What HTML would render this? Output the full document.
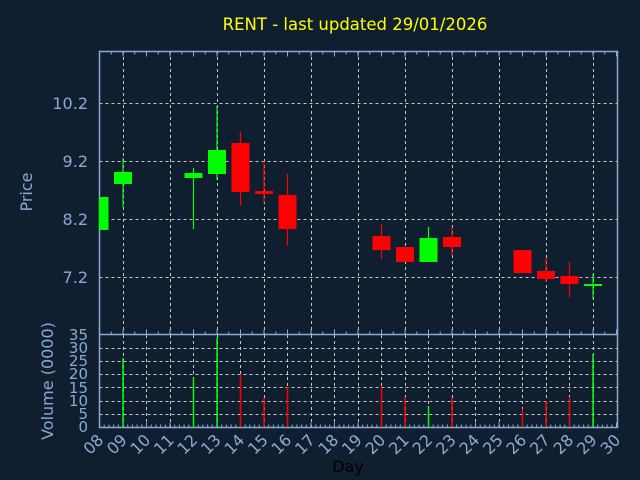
<!DOCTYPE html>
<html><head><meta charset="utf-8"><style>
html,body{margin:0;padding:0;background:#101f30;}
svg{display:block}
text{font-family:"DejaVu Sans","Liberation Sans",sans-serif;}
</style></head><body>
<svg width="640" height="480" viewBox="0 0 640 480" xmlns="http://www.w3.org/2000/svg">
<rect width="640" height="480" fill="#101f30"/>
<text x="355" y="30" fill="#ffff00" font-size="16.5" text-anchor="middle">RENT - last updated 29/01/2026</text>
<g id="grid" stroke="#c8c8c8" stroke-width="1" stroke-dasharray="3,3" fill="none">
<path d="M99.5 103.5H617M99.5 161.5H617M99.5 219.5H617M99.5 277.5H617"/>
<path d="M123.5 51V334M170.5 51V334M217.5 51V334M264.5 51V334M311.5 51V334M358.5 51V334M405.5 51V334M452.5 51V334M499.5 51V334M546.5 51V334M593.5 51V334"/>
<path d="M99.5 414.5H617M99.5 401.5H617M99.5 387.5H617M99.5 374.5H617M99.5 361.5H617M99.5 348.5H617"/>
<path d="M123.5 335V427M146.5 335V427M170.5 335V427M193.5 335V427M217.5 335V427M240.5 335V427M264.5 335V427M287.5 335V427M311.5 335V427M334.5 335V427M358.5 335V427M381.5 335V427M405.5 335V427M428.5 335V427M452.5 335V427M475.5 335V427M499.5 335V427M522.5 335V427M546.5 335V427M569.5 335V427M593.5 335V427"/>
</g>
<g stroke="#8aaad6" stroke-width="1.5" fill="none">
<path d="M99.5 51.5H617.5V427.5H99.5Z"/>
<path d="M99.5 334.5H617.5"/>
</g>
<g id="ticks" stroke="#8aaad6" stroke-width="1"></g>
<g id="candles"></g>
<g fill="#8aaad6" font-size="16" text-anchor="end">
<text x="88" y="109">10.2</text>
<text x="88" y="167">9.2</text>
<text x="88" y="225">8.2</text>
<text x="88" y="283">7.2</text>
</g>
<g fill="#8aaad6" font-size="15" text-anchor="end">
<text x="88" y="340">35</text><text x="88" y="353">30</text><text x="88" y="366">25</text><text x="88" y="379">20</text><text x="88" y="393">15</text><text x="88" y="406">10</text><text x="88" y="419">5</text><text x="88" y="432">0</text>
</g>
<text transform="translate(32,192) rotate(-90)" fill="#8aaad6" font-size="16" text-anchor="middle">Price</text>
<text transform="translate(53,381) rotate(-90)" fill="#8aaad6" font-size="16" text-anchor="middle">Volume (0000)</text>
<text x="348" y="472" fill="#000" font-size="16" text-anchor="middle">Day</text>
<g id="days" fill="#8aaad6" font-size="16" text-anchor="end"></g>
<script>
var ns="http://www.w3.org/2000/svg";
function el(p,t,a,tx){var e=document.createElementNS(ns,t);for(var k in a)e.setAttribute(k,a[k]);if(tx)e.textContent=tx;document.getElementById(p).appendChild(e);}
function X(d){return 99.5+(d-8)*23.5;}
var tk="";
for(var i=0;i<=44;i++){var x=99.5+i*11.75;tk+="M"+x+" 51.5v"+(i%2?3:5)+"M"+x+" 334.5v-"+(i%2?3:5);}
for(var i=0;i<=110;i++){var x=99.5+i*4.7;tk+="M"+x+" 427.5v-"+(i%5?3:5);}
el("ticks","path",{d:tk});
for(var d=8;d<=30;d++){var x=X(d);el("days","text",{transform:"translate("+(x+5)+",441) rotate(-45)"},(d<10?"0":"")+d);}
var G="#00ff00",R="#ff0000";
var c=[[8,G,197,230,197,230],[9,G,172,184,158,207],[12,G,173,178,168,229],[13,G,150,174,106,180],[14,R,143,192,132,206],[15,R,191,194,161,203],[16,R,195,229,174,246],[20,R,236,250,224,259],[21,R,247,262,247,262],[22,G,238,262,227,262],[23,R,237,247,227,255],[26,R,250,273,250,273],[27,R,271,279,258,282],[28,R,276,284,262,297],[29,G,284,286,274,299]];
c.forEach(function(k){var x=X(k[0]);el("candles","line",{x1:x,x2:x,y1:k[4],y2:k[5],stroke:k[1],"stroke-width":1.2});
var x0=Math.max(99.5,x-9);el("candles","rect",{x:x0,y:k[2],width:x+9-x0,height:k[3]-k[2],fill:k[1]});});
var v=[[9,G,358],[12,G,378],[13,G,338],[14,R,374],[15,R,398],[16,R,387],[20,R,386],[21,R,397],[22,G,406],[23,R,398],[26,R,409],[27,R,401],[28,R,397],[29,G,354]];
v.forEach(function(k){var x=X(k[0]);el("candles","line",{x1:x,x2:x,y1:k[2],y2:427,stroke:k[1],"stroke-width":1.5});});
</script>
</svg>
</body></html>
